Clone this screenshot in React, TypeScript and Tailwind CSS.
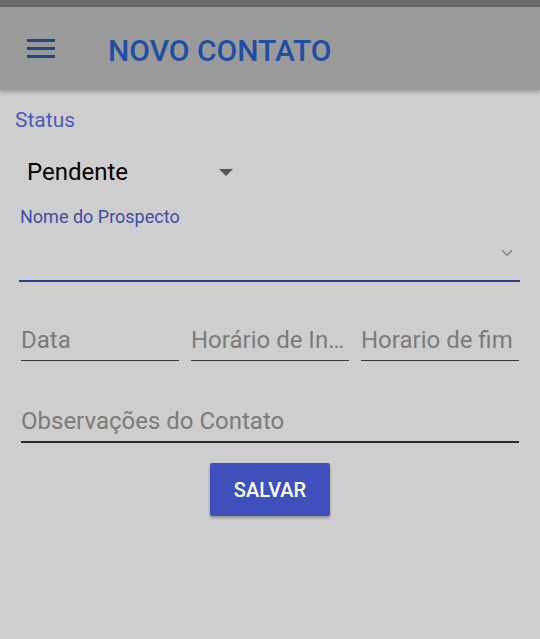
import { ChevronDown } from "lucide-react"

function Field({ label }: { label: string }) {
  return (
    <div className="border-b border-[#3a3a3a] pb-[6px]">
      <div className="whitespace-nowrap text-[24px] leading-[28px] text-[#7b7b7b]">
        {label}
      </div>
    </div>
  )
}

export default function App() {
  return (
    <div
      className="min-h-[639px] w-full bg-[#cecece]"
      style={{ fontFamily: "Roboto, 'Noto Sans', sans-serif" }}
    >
      {/* status bar */}
      <div className="h-[7px] bg-[#6b6b6b]" />

      {/* app bar */}
      <header className="relative z-10 flex h-[83px] items-center bg-[#9a9a9a] shadow-[0_2px_4px_rgba(0,0,0,0.25)]">
        <svg width="28" height="20" viewBox="0 0 28 20" className="ml-[27px]">
          <rect x="0" y="0" width="28" height="3" fill="#1f4780" />
          <rect x="0" y="8" width="28" height="3" fill="#1f4780" />
          <rect x="0" y="16" width="28" height="3" fill="#1f4780" />
        </svg>
        <h1 className="ml-[53px] mt-[3px] text-[30px] font-medium text-[#1f4fa5]">
          NOVO CONTATO
        </h1>
      </header>

      <main>
        <div className="ml-[15px] mt-[18px] text-[21px] leading-[24px] text-[#4a5ab9]">
          Status
        </div>

        <div className="ml-[27px] mt-[26px] flex w-[206px] items-center justify-between">
          <span className="text-[24px] leading-[28px] text-black">Pendente</span>
          <span className="mt-[1px] h-0 w-0 border-x-[7px] border-t-[7px] border-x-transparent border-t-[#555555]" />
        </div>

        <div className="ml-[20px] mt-[20px] text-[18px] leading-[22px] text-[#3e4ca5]">
          Nome do Prospecto
        </div>

        <div className="ml-[19px] mr-[20px] flex h-[54px] items-start justify-end border-b-2 border-[#2e3d8f]">
          <ChevronDown className="mr-[4px] mt-[16px] h-[18px] w-[18px] text-[#8a8a8a]" strokeWidth={2.25} />
        </div>

        <div className="mx-[21px] mt-[44px] grid grid-cols-3 gap-[12px]">
          <Field label="Data" />
          <Field label="Horário de In…" />
          <Field label="Horario de fim" />
        </div>

        <div className="mx-[21px] mt-[46px] border-b-2 border-[#2a2a2a] pb-[6px]">
          <div className="text-[24px] leading-[28px] text-[#7b7b7b]">
            Observações do Contato
          </div>
        </div>

        <div className="mt-[20px] flex justify-center">
          <button className="h-[53px] w-[120px] rounded-[2px] bg-[#3f4fbb] text-[20px] font-medium text-white shadow-[0_2px_3px_rgba(0,0,0,0.3)]">
            SALVAR
          </button>
        </div>
      </main>
    </div>
  )
}
